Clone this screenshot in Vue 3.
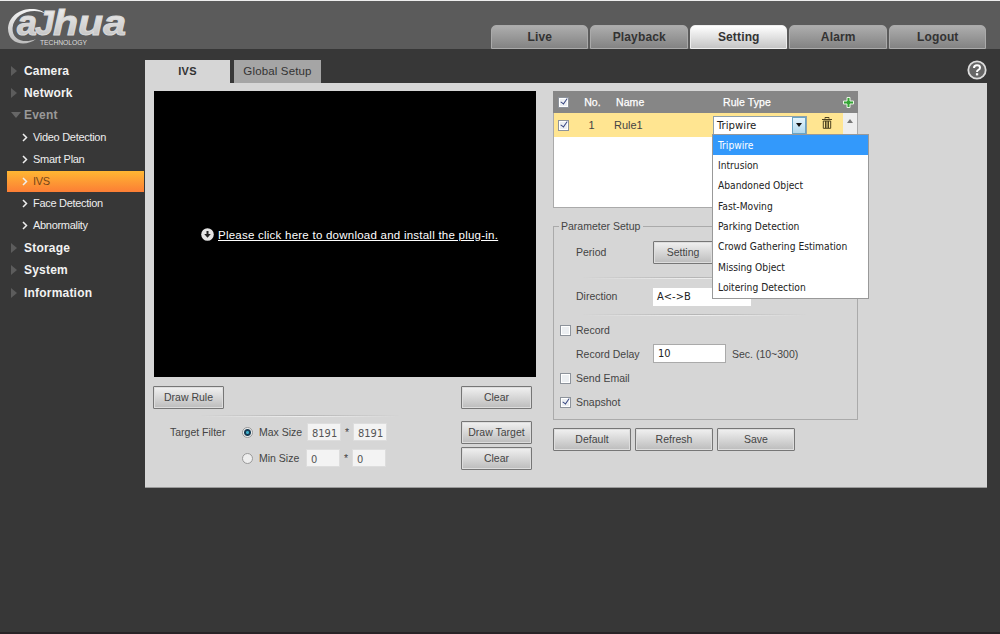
<template>
  <div class="page">
    <header class="header">
      <svg class="logo" width="122" height="42" viewBox="0 0 122 42" role="img" aria-label="alhua technology">
        <defs>
          <linearGradient id="metal" x1="0" y1="0" x2="0" y2="1">
            <stop offset="0" stop-color="#f4f4f4" />
            <stop offset="1" stop-color="#bdbdbd" />
          </linearGradient>
        </defs>
        <path class="swirl" d="M39 6C31 -3 3 -1 1 20C1 37 19 39 29 31C17 36 5 32 5.500 20C7 4 28 -1 39 6Z" />
        <text class="mark" x="10" y="27" textLength="20" lengthAdjust="spacingAndGlyphs">a</text>
        <text class="mark" x="28" y="27" textLength="19" lengthAdjust="spacingAndGlyphs">J</text>
        <text class="mark" x="46" y="27" textLength="73" lengthAdjust="spacingAndGlyphs">hua</text>
        <text class="tech" x="33" y="36.500" textLength="47" lengthAdjust="spacingAndGlyphs">TECHNOLOGY</text>
      </svg>
      <nav class="nav">
        <a v-for="n in navs" :key="n" :class="{ on: n === 'Setting' }">{{ n }}</a>
      </nav>
    </header>

    <div class="main">
      <aside class="side">
        <template v-for="m in menus" :key="m.name">
          <div class="menu" :class="{ open: m.children }"><i></i>{{ m.name }}</div>
          <div v-for="c in m.children" :key="c" class="sub" :class="{ on: c === 'IVS' }">
            <svg width="6" height="9" viewBox="0 0 6 9"><path d="M1 1L4.500 4.500L1 8" /></svg>{{ c }}
          </div>
        </template>
      </aside>

      <div class="content">
        <div class="tabs">
          <span class="tab on">IVS</span>
          <span class="tab">Global Setup</span>
          <svg class="help" width="20" height="20" viewBox="0 0 20 20">
            <circle cx="10" cy="10" r="8.700" />
            <path d="M7 8Q7 5.300 10 5.300T13 7.700Q13 9 11.400 9.800Q10 10.500 10 12" />
            <rect x="8.900" y="13.200" width="2.300" height="2.200" />
          </svg>
        </div>

        <div class="panel">
          <section class="left">
            <div class="video">
              <svg width="13" height="13" viewBox="0 0 13 13">
                <circle cx="6.500" cy="6.500" r="6.300" fill="#e4e4e4" />
                <path d="M5.500 3H7.500V6H9.800L6.500 9.800L3.200 6H5.500Z" fill="#222" />
              </svg>
              <a>Please click here to download and install the plug-in.</a>
            </div>
            <div class="bar">
              <button class="btn">Draw Rule</button>
              <button class="btn">Clear</button>
            </div>
            <div class="line short"></div>
            <div class="size">
              <span class="title">Target Filter</span>
              <i class="radio on"></i><span class="name">Max Size</span>
              <input v-model="maxW" /><b>*</b><input v-model="maxH" />
              <button class="btn">Draw Target</button>
            </div>
            <div class="size min">
              <span class="title"></span>
              <i class="radio"></i><span class="name">Min Size</span>
              <input v-model="minW" /><b>*</b><input v-model="minH" />
              <button class="btn">Clear</button>
            </div>
          </section>

          <section class="right">
            <div class="table">
              <div class="row head">
                <i class="check on"></i><span class="no">No.</span><span class="rule">Name</span>
                <span class="type">Rule Type</span>
                <svg width="11" height="11" viewBox="0 0 11 11">
                  <path d="M4 .5H7V4H10.500V7H7V10.500H4V7H.5V4H4Z" fill="#35a435" stroke="#e6f7e2" />
                </svg>
              </div>
              <div class="row item">
                <i class="check on"></i><span class="no">1</span><span class="rule">Rule1</span>
                <div class="select">
                  <span>{{ type }}</span><em></em>
                  <ul>
                    <li v-for="t in types" :key="t" :class="{ on: t === type }" @click="type = t">{{ t }}</li>
                  </ul>
                </div>
                <svg class="trash" width="10" height="12" viewBox="0 0 10 12">
                  <path d="M3 1.700V.5H7V1.700M0 2.500H10" />
                  <path d="M1.300 4V11.300H8.700V4ZM3.500 4V11M5 4V11M6.500 4V11" />
                </svg>
                <div class="scroll"></div>
              </div>
            </div>

            <div class="setup">
              <div class="legend">Parameter Setup</div>
              <div class="field period"><label>Period</label><button class="btn">Setting</button></div>
              <div class="line"></div>
              <div class="field direction"><label>Direction</label><span class="dir">A&lt;-&gt;B</span></div>
              <div class="line"></div>
              <div class="field record"><i class="check"></i>Record</div>
              <div class="field delay"><label>Record Delay</label><input v-model="delay" /><span>Sec. (10~300)</span></div>
              <div class="field"><i class="check"></i>Send Email</div>
              <div class="field"><i class="check on"></i>Snapshot</div>
            </div>

            <div class="actions">
              <button v-for="a in ['Default', 'Refresh', 'Save']" :key="a" class="btn">{{ a }}</button>
            </div>
          </section>
        </div>
      </div>
    </div>
  </div>
</template>

<script setup>
import { ref } from 'vue'

const navs = ['Live', 'Playback', 'Setting', 'Alarm', 'Logout']
const menus = [
  { name: 'Camera' },
  { name: 'Network' },
  { name: 'Event', children: ['Video Detection', 'Smart Plan', 'IVS', 'Face Detection', 'Abnormality'] },
  { name: 'Storage' },
  { name: 'System' },
  { name: 'Information' }
]
const types = [
  'Tripwire', 'Intrusion', 'Abandoned Object', 'Fast-Moving',
  'Parking Detection', 'Crowd Gathering Estimation', 'Missing Object', 'Loitering Detection'
]

const type = ref('Tripwire')
const maxW = ref('8191')
const maxH = ref('8191')
const minW = ref('0')
const minH = ref('0')
const delay = ref('10')
</script>

<style>
body{ margin:0; background:#373737 }
</style>

<style scoped>
*{ box-sizing:border-box }
.page{ height:634px; background:#373737; border-top:1px solid #eee; border-bottom:2px solid #292326; overflow:hidden; font:10.5px "Liberation Sans", Arial, sans-serif; color:#444 }
.header{ height:48px; background:#5b5b5b; display:flex; justify-content:space-between; padding:7px 14px 0 7px }
.logo{ overflow:visible }
.swirl{ fill:url(#metal) }
.mark{ font:italic bold 35px "Liberation Sans", Arial, sans-serif; fill:url(#metal); stroke:#dadada; stroke-width:1 }
.tech{ font:7px "Liberation Sans", Arial, sans-serif; fill:#ddd }
.nav{ display:flex; gap:2px; align-items:flex-end }
.nav a{ width:97.5px; height:24px; line-height:22px; text-align:center; font-size:12px; font-weight:bold; letter-spacing:.15px; padding-left:1px; color:#333; background:linear-gradient(#adadad, #838383); border:1px solid #aaa; border-radius:5px 5px 0 0 }
.nav a.on{ background:linear-gradient(#fff, #c5c5c5); border-color:#eee }

.main{ display:flex }
.side{ width:145px; padding:11px 1px 0 7px }
.menu{ height:22.200px; display:flex; align-items:center; color:#f2f2f2; font-size:12px; font-weight:bold; letter-spacing:.2px }
.menu i{ width:0; height:0; margin:0 7px 0 4px; border:5px solid transparent; border-left:6px solid #5c5c5c; border-right:0 }
.menu.open{ color:#999 }
.menu.open i{ margin:0 3px 0 4px; border:5px solid transparent; border-top:6px solid #666; border-bottom:0 }
.sub{ height:21px; margin-bottom:1.100px; display:flex; align-items:center; gap:5px; padding-left:15px; color:#eee; font-size:11px; letter-spacing:-.3px }
.sub svg{ fill:none; stroke:#eee; stroke-width:1.500 }
.sub.on{ background:linear-gradient(#ffb733, #fc7e35); color:#754719 }

.content{ width:842px; padding-top:11px }
.tabs{ height:23px; display:flex; gap:4px; align-items:flex-end }
.tab{ width:87px; height:23px; line-height:23px; text-align:center; font-size:11.5px; letter-spacing:.15px; color:#333; background:#a5a5a5 }
.tab.on{ width:85px; font-size:11px; font-weight:bold; letter-spacing:.3px; background:#d6d6d6 }
.help{ margin:0 0 3px auto }
.help circle{ fill:#666; stroke:#ddd; stroke-width:1.800 }
.help path{ fill:none; stroke:#fff; stroke-width:2 }
.help rect{ fill:#fff }

.panel{ height:405px; display:flex; gap:17px; padding:8px 9px; background:#d6d6d6; border-bottom:1px solid #999 }
.left{ width:382px }
.video{ height:286px; background:#000; display:flex; gap:4px; align-items:center; color:#fff; font-size:11.5px; padding:1px 0 0 47px }
.video a{ letter-spacing:.24px; text-decoration:underline }
.btn{ flex:none; width:71px; height:23px; padding:0 0 1px; font:inherit; color:#444; background:linear-gradient(#f1f1f1, #bcbcbc); border:1px solid #767676; box-shadow:inset 0 0 0 1px #ddd; border-radius:1px }
.bar{ display:flex; justify-content:space-between; margin:9px 4px 0 -1px }
.line{ height:2px; margin:0 50px 0 28px; background:linear-gradient(#b5b5b5 50%, #eee 50%); mask-image:linear-gradient(to right, transparent, #000 50%, transparent) }
.line.short{ width:200px; margin:6px 0 0 46px }
.size{ height:22px; margin:4px 4px 0 0; display:flex; align-items:center }
.size.min{ margin-top:4px }
.size .title{ width:88px; padding-left:16px }
.size .name{ width:48px; margin-left:6px }
.size input{ width:34px; height:18px; padding:2px 0 0 4px; border:1px solid #ddd; background:#f3f3f3; color:#555; font:11px "DejaVu Sans Condensed", sans-serif }
.size.min .name{ width:47px }
.size b{ width:12px; text-align:center; font-weight:normal }
.size .btn{ margin-left:auto }
.radio{ width:11px; height:11px; border:1px solid #999; border-radius:50%; background:#eee }
.radio.on{ background:radial-gradient(circle, #3fb1cc 0 1px, #173c54 2px 3px, #eee 4px) }
.check{ flex:none; width:11px; height:11px; border:1px solid #8d939b; background:#eceff2; box-shadow:inset 0 0 0 1px #fff; position:relative }
.check.on::after{ content:""; position:absolute; left:2.500px; top:-.5px; width:3px; height:6px; border:solid #34437f; border-width:0 1.700px 1.700px 0; transform:rotate(35deg) }

.right{ width:305px }
.table{ height:117px; background:#fff; border:1px solid #aaa; border-top:0 }
.row{ display:flex; align-items:center; padding-left:4px; font-size:11px }
.head{ height:22px; margin:0 -1px; padding-left:5px; background:#868686; color:#fff; font-size:10.5px; -webkit-text-stroke:.25px #fff; letter-spacing:.1px }
.row .no{ width:47px; text-align:center }
.row .no + .rule{ width:99px }
.head .type{ width:128px; padding-left:8px }
.item{ height:24px; background:#ffe591 }
.item .no{ width:45px }
.item .no + .rule{ width:99px }
.select{ flex:none; position:relative; width:94px; height:19px; display:flex; background:#fff; border:1px solid #8ea0ab; font:11.3px/18px "DejaVu Sans Condensed", sans-serif; color:#222 }
.select span{ flex:1; padding-left:3px }
.select em{ width:14px; border:1px solid #68a5c5; background:linear-gradient(#e5f4fc, #b0d8ee); display:flex; align-items:center; justify-content:center }
.select em::after{ content:""; border:3.500px solid transparent; border-top:4px solid #111; border-bottom:0 }
.select ul{ position:absolute; z-index:5; left:-2px; top:17px; width:157px; height:165px; margin:0; padding:0; list-style:none; background:#fff; border:1px solid #999; font-size:10.200px }
.select li{ height:20.400px; line-height:21px; padding-left:5px }
.select li.on{ background:#3399fb; color:#fff }
.trash{ margin:-4px 0 0 15px; fill:none; stroke:#4d4220 }
.scroll{ width:14px; height:24px; margin-left:auto; background:#eee; display:flex; justify-content:center; padding-top:6px }
.scroll::after{ content:""; height:0; border:3px solid transparent; border-bottom:4px solid #777; border-top:0 }

.setup{ height:194px; margin-top:18px; border:1px solid #aaa }
.legend{ width:84px; margin:-7px 0 0 5px; padding:0 2px; height:13px; line-height:13px; background:#d6d6d6; white-space:nowrap }
.field{ height:24px; display:flex; align-items:center; padding-left:6px }
.field .check{ margin-right:5px }
.field label{ width:77px; margin-left:16px }
.field.period{ margin-top:7px }
.field.period .btn{ width:60px }
.period + .line{ margin-top:13px }
.line + .direction{ margin-top:6px }
.direction{ height:22px }
.direction + .line{ margin-top:7px }
.dir{ width:98px; height:18px; line-height:18px; margin-top:2px; padding-left:4px; background:#fff; font-size:11px; font-family:"DejaVu Sans Condensed", sans-serif; color:#222 }
.record{ margin-top:2px }
.delay input{ width:73px; height:19px; margin:-1px 6px 0 0; padding:1px 4px; border:1px solid #aaa; font:11px "DejaVu Sans Condensed", sans-serif; color:#222 }
.actions{ display:flex; gap:4px; margin-top:8px }
.actions .btn{ width:78px }
</style>
